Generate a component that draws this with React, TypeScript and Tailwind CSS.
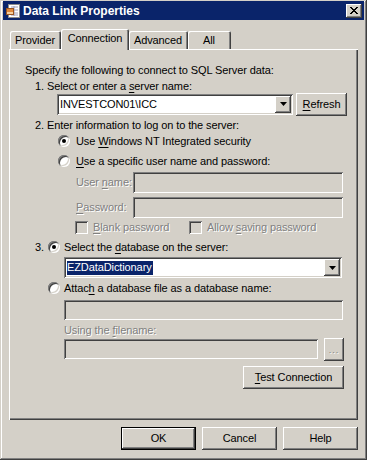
import type { ReactNode } from 'react'

const raised = 'shadow-[inset_-1px_-1px_#404040,inset_1px_1px_#ffffff,inset_-2px_-2px_#808080,inset_2px_2px_#d4d0c8]'
const sunken = 'shadow-[inset_1px_1px_#808080,inset_-1px_-1px_#ffffff,inset_2px_2px_#404040,inset_-2px_-2px_#d4d0c8]'
const dim = 'text-[#808080] [text-shadow:1px_1px_#ffffff]'

function U({ children }: { children: ReactNode }) {
  return <span className="underline underline-offset-[2px]">{children}</span>
}

function Radio({ checked }: { checked?: boolean }) {
  return (
    <div className={`w-[12px] h-[12px] rounded-full bg-white flex-shrink-0 flex items-center justify-center ${sunken}`}>
      {checked && <div className="w-[4px] h-[4px] rounded-full bg-black" />}
    </div>
  )
}

function Check() {
  return <div className={`w-[13px] h-[13px] flex-shrink-0 bg-[#d4d0c8] ${sunken}`} />
}

function Arrow() {
  return (
    <div className={`w-[16px] h-[17px] flex items-center justify-center bg-[#d4d0c8] ${raised}`}>
      <svg width="7" height="4" viewBox="0 0 7 4"><path d="M0 0h7L3.5 4z" fill="#000" /></svg>
    </div>
  )
}

function Btn({ children, w, def }: { children: ReactNode; w: string; def?: boolean }) {
  return (
    <div className={`${w} h-[23px] flex items-center justify-center bg-[#d4d0c8] ${def ? 'border border-black' : ''}`}>
      <div className={`w-full h-full flex items-center justify-center ${raised}`}>{children}</div>
    </div>
  )
}

const TABS = [
  { label: 'Provider', w: 'w-[51px]' },
  { label: 'Connection', w: 'w-[68px]', active: true },
  { label: 'Advanced', w: 'w-[59px]' },
  { label: 'All', w: 'w-[43px]' },
]

export default function App() {
  return (
    <div className="w-[367px] h-[460px] bg-[#d4d0c8] pt-[1px] px-[3px] font-['Liberation_Sans',Arial,sans-serif] text-[11px] tracking-[-0.1px] leading-none text-black select-none shadow-[inset_-1px_-1px_#404040,inset_1px_1px_#d4d0c8,inset_-2px_-2px_#808080,inset_2px_2px_#ffffff]">
      {/* title bar */}
      <div className="h-[19px] bg-[#0a246a] flex items-center pl-[2px] pr-[2px]">
        <svg width="16" height="16" viewBox="0 0 16 16" className="flex-shrink-0">
          <rect x="3.5" y="1.5" width="11" height="13" fill="#fff" stroke="#8c8c8c" />
          <path d="M6 4h7M6 7h7M6 10h7M6 12h7M9 3v10" stroke="#a0a0b8" />
          <rect x="1" y="5" width="8" height="4" fill="#e08a3c" />
          <rect x="1" y="9" width="8" height="3" fill="#f6d0a0" />
          <rect x="1.5" y="5.5" width="7" height="6" fill="none" stroke="#9a5520" />
        </svg>
        <span className="ml-[2px] text-white font-bold text-[12px] tracking-normal">Data Link Properties</span>
        <div className={`ml-auto w-[16px] h-[14px] bg-[#d4d0c8] flex items-center justify-center ${raised}`}>
          <svg width="8" height="7" viewBox="0 0 8 7" shapeRendering="crispEdges">
            <path d="M0 0h2v1h1v1h2V1h1V0h2v1H7v1H6v1H5v1h1v1h1v1h1v1H6V6H5V5H3v1H2v1H0V6h1V5h1V4h1V3H2V2H1V1H0z" fill="#000" />
          </svg>
        </div>
      </div>

      {/* tabs */}
      <div className="mt-[9px] ml-[7px] h-[20px] flex items-end">
        {TABS.map(t => (
          <div
            key={t.label}
            className={`${t.w} flex items-center justify-center bg-[#d4d0c8] rounded-t-[2px] shadow-[inset_1px_1px_#ffffff,inset_-1px_0_#404040,inset_-2px_0_#808080] ${
              t.active ? 'h-[21px] -mb-[1px] relative z-10 pb-[3px]' : 'h-[18px] pr-[1px]'
            }`}
          >
            {t.label}
          </div>
        ))}
      </div>

      {/* panel */}
      <div className="ml-[6px] w-[349px] h-[371px] shadow-[inset_1px_1px_#ffffff,inset_-1px_-1px_#404040,inset_-2px_-2px_#808080] flex flex-col">
        <div className="mt-[14px] ml-[16px] h-[14px] flex items-center">Specify the following to connect to SQL Server data:</div>
        <div className="mt-[2px] ml-[26px] h-[14px] flex items-center">1. Select or enter a&nbsp;<U>s</U>erver name:</div>
        <div className="ml-[48px] h-[22px] flex items-center gap-[3px]">
          <div className={`w-[236px] h-[21px] bg-white flex items-center pl-[3px] pr-[2px] ${sunken}`}>
            <span className="flex-1">INVESTCON01\ICC</span>
            <Arrow />
          </div>
          <Btn w="w-[51px] h-[22px]"><span><U>R</U>efresh</span></Btn>
        </div>
        <div className="mt-[3px] ml-[26px] h-[14px] flex items-center">2. Enter information to log on to the server:</div>
        <div className="mt-[2px] ml-[49px] h-[14px] flex items-center gap-[6px]">
          <Radio checked />
          <span>Use <U>W</U>indows NT Integrated security</span>
        </div>
        <div className="mt-[6px] ml-[49px] h-[14px] flex items-center gap-[6px]">
          <Radio />
          <span><U>U</U>se a specific user name and password:</span>
        </div>
        <div className="mt-[4px] ml-[67px] h-[21px] flex items-center">
          <span className={`w-[57px] ${dim}`}>User <U>n</U>ame:</span>
          <div className={`w-[210px] h-[21px] bg-[#d4d0c8] ${sunken}`} />
        </div>
        <div className="mt-[4px] ml-[67px] h-[21px] flex items-center">
          <span className={`w-[57px] ${dim}`}><U>P</U>assword:</span>
          <div className={`w-[210px] h-[21px] bg-[#d4d0c8] ${sunken}`} />
        </div>
        <div className="mt-[2px] ml-[66px] h-[14px] flex items-center">
          <div className="w-[114px] flex items-center gap-[5px]">
            <Check />
            <span className={dim}><U>B</U>lank password</span>
          </div>
          <div className="flex items-center gap-[5px]">
            <Check />
            <span className={dim}>Allow <U>s</U>aving password</span>
          </div>
        </div>
        <div className="mt-[6px] ml-[26px] h-[14px] flex items-center">
          <span className="w-[13px]">3.</span>
          <Radio checked />
          <span className="ml-[4px]">Select the <U>d</U>atabase on the server:</span>
        </div>
        <div className="mt-[3px] ml-[55px] h-[21px]">
          <div className={`w-[278px] h-[21px] bg-white flex items-center pl-[3px] pr-[2px] ${sunken}`}>
            <div className="flex-1">
              <span className="bg-[#0a246a] text-white inline-flex items-center h-[14px] pr-[1px]">EZDataDictionary</span>
            </div>
            <Arrow />
          </div>
        </div>
        <div className="mt-[3px] ml-[39px] h-[14px] flex items-center gap-[4px]">
          <Radio />
          <span>Attac<U>h</U> a database file as a database name:</span>
        </div>
        <div className="mt-[5px] ml-[55px] h-[20px]">
          <div className={`w-[279px] h-[20px] bg-[#d4d0c8] ${sunken}`} />
        </div>
        <div className={`mt-[3px] ml-[55px] h-[14px] flex items-center ${dim}`}>
          <span>Using the <U>f</U>ilename:</span>
        </div>
        <div className="mt-[2px] ml-[55px] h-[20px] flex items-center gap-[6px]">
          <div className={`w-[254px] h-[20px] bg-[#d4d0c8] ${sunken}`} />
          <Btn w="w-[20px] h-[20px]"><span className={`${dim} text-[9px] tracking-[1px] pt-[3px]`}>...</span></Btn>
        </div>
        <div className="mt-[7px] ml-[234px] h-[22px]">
          <Btn w="w-[101px] h-[22px]"><span><U>T</U>est Connection</span></Btn>
        </div>
      </div>

      {/* dialog buttons */}
      <div className="mt-[7px] ml-[6px] w-[349px] flex justify-end gap-[6px]">
        <Btn w="w-[75px]" def>OK</Btn>
        <Btn w="w-[75px]">Cancel</Btn>
        <Btn w="w-[75px]">Help</Btn>
      </div>
    </div>
  )
}
